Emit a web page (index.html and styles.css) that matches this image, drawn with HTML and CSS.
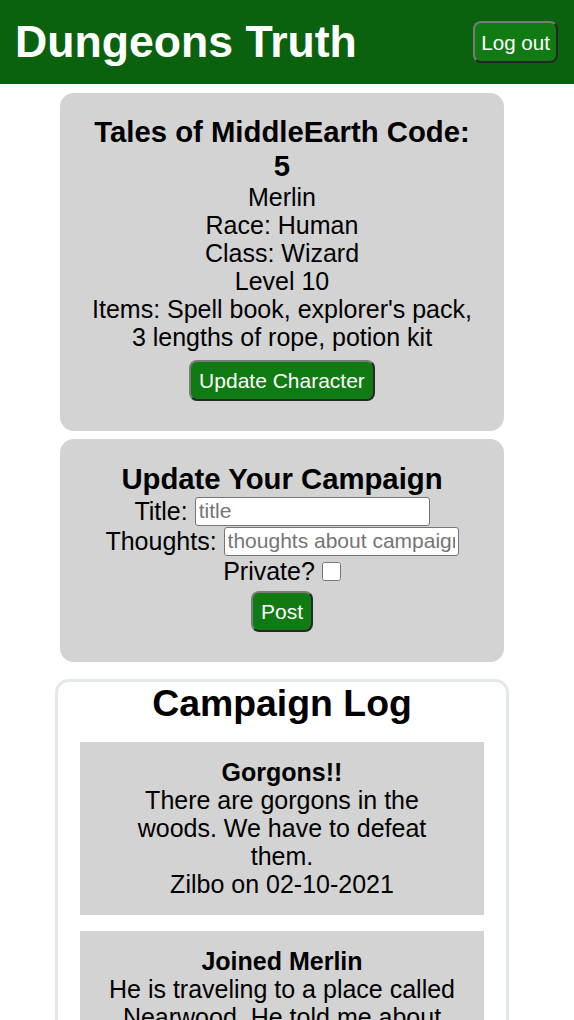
FILE: index.html
```html
<!DOCTYPE html>
<html lang="en">
<head>
<meta charset="utf-8">
<title>Dungeons Truth</title>
<link rel="stylesheet" href="styles.css">
</head>
<body>
<header class="topbar">
  <h1 class="brand">Dungeons Truth</h1>
  <button class="btn btn-logout" type="button">Log out</button>
</header>
<main class="page">
  <section class="card card-character">
    <h3 class="card-title">Tales of MiddleEarth Code: 5</h3>
    <div class="line">Merlin</div>
    <div class="line">Race: Human</div>
    <div class="line">Class: Wizard</div>
    <div class="line">Level 10</div>
    <div class="line">Items: Spell book, explorer's pack, 3 lengths of rope, potion kit</div>
    <button class="btn btn-gap" type="button">Update Character</button>
  </section>

  <section class="card card-form">
    <h3 class="card-title">Update Your Campaign</h3>
    <label class="field">Title: <input class="text-input" type="text" placeholder="title"></label>
    <label class="field">Thoughts: <input class="text-input" type="text" placeholder="thoughts about campaign"></label>
    <label class="field">Private? <input class="check" type="checkbox"></label>
    <button class="btn btn-post" type="button">Post</button>
  </section>

  <section class="log">
    <h2 class="log-title">Campaign Log</h2>
    <article class="entry">
      <div class="entry-title">Gorgons!!</div>
      <div class="entry-text">There are gorgons in the woods. We have to defeat them.</div>
      <div class="entry-meta">Zilbo on 02-10-2021</div>
    </article>
    <article class="entry">
      <div class="entry-title">Joined Merlin</div>
      <div class="entry-text">He is traveling to a place called Nearwood. He told me about the old ruins there.</div>
      <div class="entry-meta">Zilbo on 02-09-2021</div>
    </article>
  </section>
</main>
</body>
</html>
```

FILE: styles.css
```css
* { box-sizing: border-box; }

html, body {
  margin: 0;
  padding: 0;
  background: #ffffff;
}

body {
  font-family: "Liberation Sans", Arial, Helvetica, sans-serif;
  font-size: 25px;
  line-height: 28px;
  color: #000;
}

.topbar {
  display: flex;
  align-items: center;
  justify-content: space-between;
  height: 84px;
  padding: 0 16px 0 15px;
  background: #0b620e;
}

.brand {
  margin: 0;
  font-size: 44.6px;
  line-height: 50px;
  font-weight: bold;
  color: #ffffff;
}

.btn {
  font-family: "Liberation Sans", Arial, Helvetica, sans-serif;
  font-size: 21px;
  line-height: 25px;
  color: #ffffff;
  background: #0f7b12;
  padding: 6px 8px;
  border: 2px solid;
  border-color: #7a7a7a #262626 #262626 #7a7a7a;
  border-radius: 8px;
  cursor: pointer;
}

.btn-logout {
  padding: 7px 6px 6px;
  font-size: 20.6px;
}

.page {
  width: 564px;
  padding-top: 9px;
  display: flex;
  flex-direction: column;
  align-items: center;
}

.card {
  width: 444px;
  background: #d3d3d3;
  border-radius: 14px;
  padding: 22px 26px 30px;
  text-align: center;
  display: flex;
  flex-direction: column;
  align-items: center;
}

.card + .card {
  margin-top: 8px;
}

.card-form {
  padding-top: 23px;
}

.card-title {
  margin: 0;
  font-size: 29.3px;
  line-height: 34px;
  font-weight: bold;
}

.line {
  width: 100%;
}

.btn-gap {
  margin-top: 9px;
}

.field {
  display: flex;
  align-items: center;
  justify-content: center;
  gap: 7px;
  height: 30px;
}

.text-input {
  width: 235px;
  height: 29px;
  margin: 0;
  padding: 1px 3px;
  font-family: "Liberation Sans", Arial, Helvetica, sans-serif;
  font-size: 21px;
  border: 1px solid #767676;
  border-radius: 3px;
  background: #ffffff;
}

.text-input::placeholder {
  color: #757575;
}

.check {
  width: 19px;
  height: 19px;
  margin: 0;
}

.btn-post {
  margin-top: 5px;
}

.log {
  width: 454px;
  margin-top: 17px;
  border: 3px solid #e3eae3;
  border-radius: 14px;
  background: #ffffff;
  padding: 0 22px 20px;
  text-align: center;
}

.log-title {
  margin: 0 0 18px;
  font-size: 37.4px;
  line-height: 42px;
  font-weight: bold;
}

.entry {
  background: #d3d3d3;
  padding: 16px 26px 17px;
}

.entry + .entry {
  margin-top: 16px;
}

.entry-title {
  font-weight: bold;
}
```
